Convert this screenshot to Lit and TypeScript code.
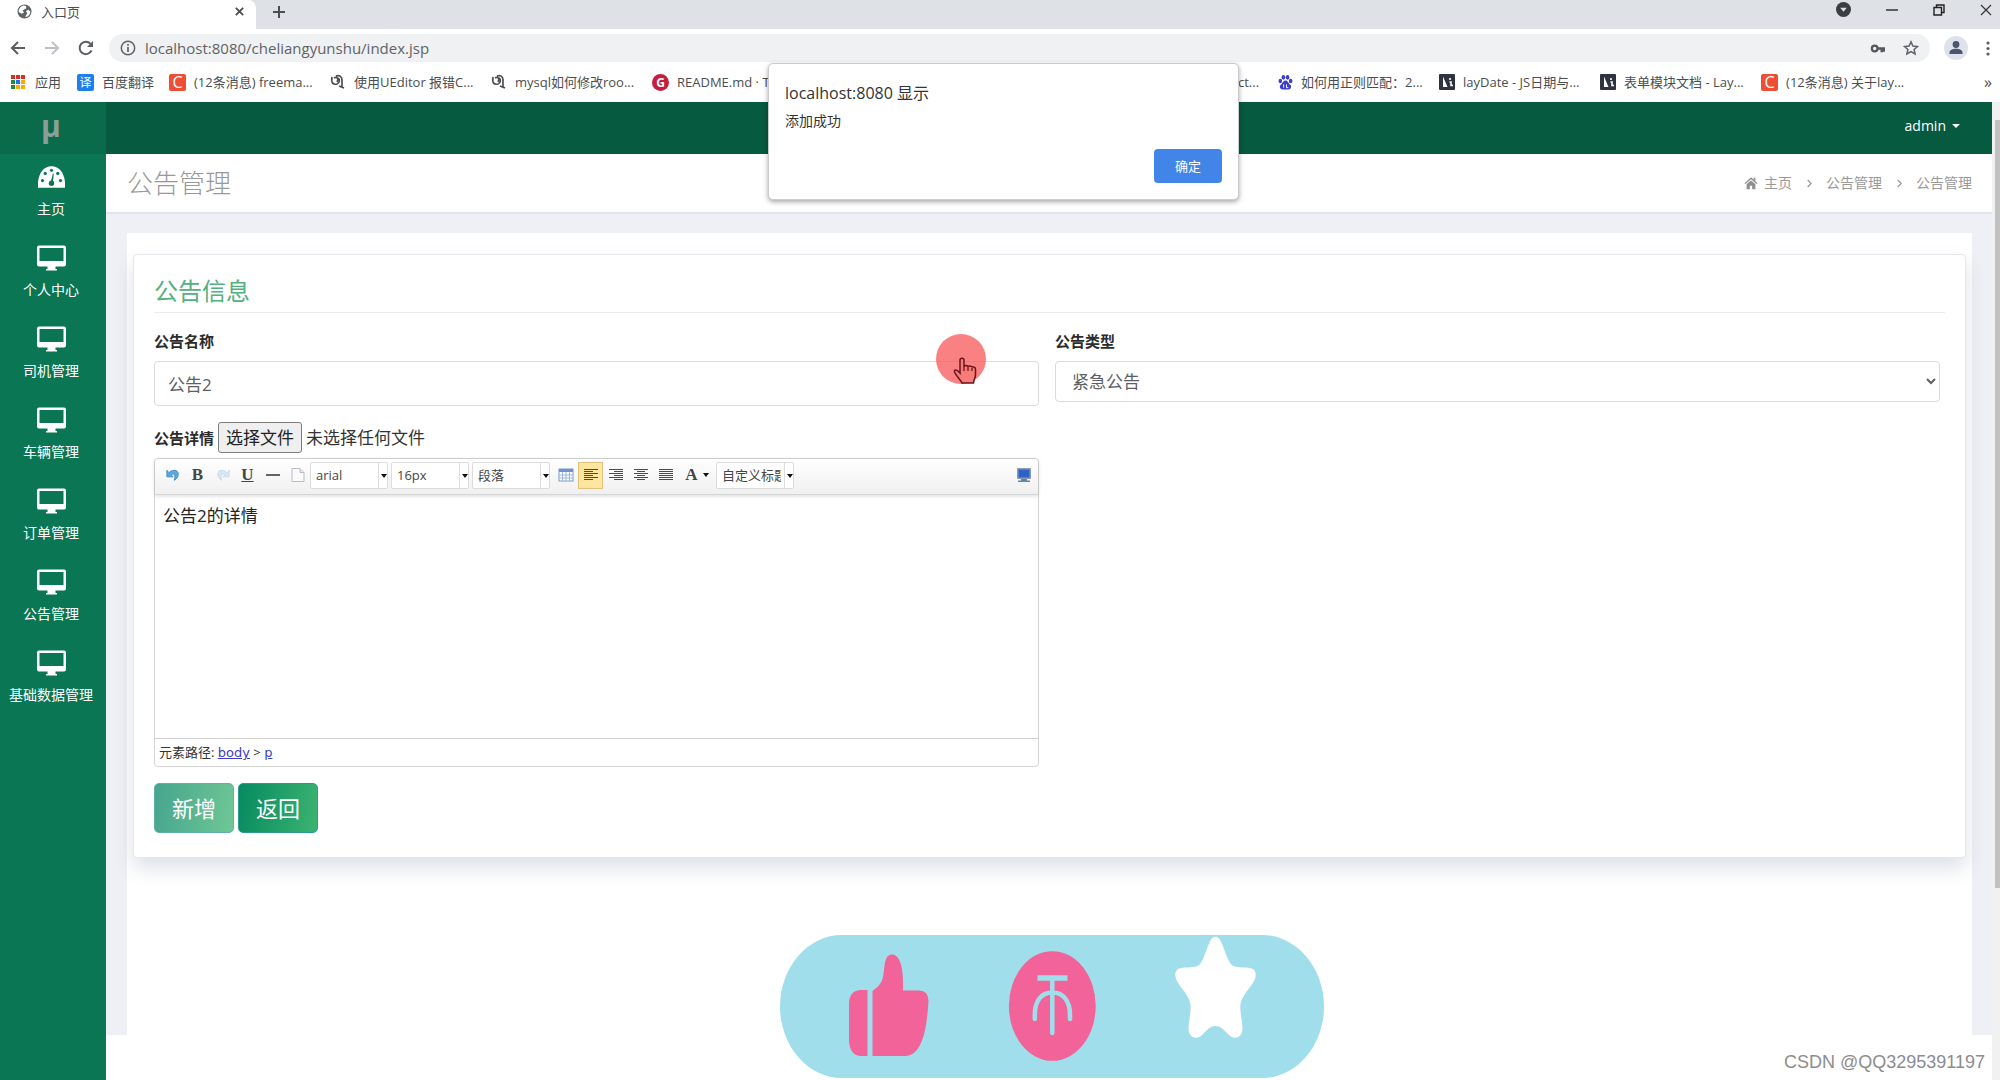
import { LitElement, html, css, svg, nothing } from "lit";
import { customElement, state } from "lit/decorators.js";
import { classMap } from "lit/directives/class-map.js";

const icon = (body: unknown, w = 16, h = 16, vb = "0 0 16 16") =>
  html`<svg class="ic" width=${w} height=${h} viewBox=${vb} aria-hidden="true">${body}</svg>`;

/* ---------- browser icons ---------- */
const globe = svg`<circle cx="8" cy="8" r="7.5" fill="#5f6368"/><path d="M7 1.5C4 2 1.500 5 1.800 8.500L5 10.500 7.500 9 6 7 8 5.500 10 4.500 9.500 2ZM12 6 9.500 7.500 11 10 9.500 12 9 14.200C12 13.500 14.300 11 14.300 8Z" fill="#fff"/>`;
const back = svg`<path d="M15 8H2M8 2 2 8l6 6" fill="none" stroke="#5a5d61" stroke-width="2"/>`;
const fwd = svg`<path d="M1 8h13M8 2l6 6-6 6" fill="none" stroke="#bdc0c4" stroke-width="2"/>`;
const reload = svg`<path d="M13.500 10.500A6.200 6.200 0 1 1 12.500 3.800" fill="none" stroke="#5a5d61" stroke-width="2"/><path d="M15 1v6H9Z" fill="#5a5d61"/>`;
const info = svg`<circle cx="8" cy="8" r="6.700" fill="none" stroke="#5f6368" stroke-width="1.500"/><path d="M8 7v5M8 4v1.700" stroke="#5f6368" stroke-width="1.700"/>`;
const key = svg`<circle cx="5" cy="8" r="3" fill="none" stroke="#55585c" stroke-width="2.400"/><path d="M8 8h8M12.500 8v4M15 8v3.500" stroke="#55585c" stroke-width="2.600"/>`;
const starLine = svg`<path d="M8 1.800 9.900 6l4.600.5-3.400 3 1 4.500L8 11.600 3.900 14l1-4.500-3.400-3L6.100 6Z" fill="none" stroke="#5f6368" stroke-width="1.500"/>`;
const person = svg`<circle cx="12" cy="12" r="12" fill="#dfe2ea"/><circle cx="12" cy="8.500" r="3.400" fill="#4c5570"/><path d="M5.500 18v-1.500c0-5 13-5 13 0V18Z" fill="#4c5570"/>`;

/* ---------- bookmark icons ---------- */
const apps = svg`${["#d93025", "#d93025", "#d93025", "#1e8e3e", "#1a73e8", "#f9ab00", "#1e8e3e", "#f9ab00", "#f9ab00"].map(
  (c, i) => svg`<rect x=${1 + (i % 3) * 5} y=${1 + Math.floor(i / 3) * 5} width="4" height="4" fill=${c}/>`
)}`;
const person2 = svg`<path d="M2 3c-1 6 1 8 5 7 3-1 3-5 1-6M6 2c3-1 6 0 6 4v8M9 12l5 2M4 4c3-2 5 1 3 4" fill="none" stroke="#4a4d52" stroke-width="1.700"/>`;
const paw = svg`<g fill="#3a3fd0"><ellipse cx="2.500" cy="7" rx="1.900" ry="2.400"/><ellipse cx="5.800" cy="3" rx="1.900" ry="2.600"/><ellipse cx="10.200" cy="3" rx="1.900" ry="2.600"/><ellipse cx="13.500" cy="7" rx="1.900" ry="2.400"/><path d="M8 6.500c2.500 0 3 3 5 4.500s1 5-2 5c-1.500 0-4.500 0-6 0-3 0-4-3.500-2-5s2.500-4.500 5-4.500Z"/></g><path d="M6 10.500v3.500M9 10.500v3.500h2" stroke="#fff" fill="none"/>`;
const lay = svg`<rect width="16" height="16" rx="1" fill="#2f3340"/><path d="M4 2.500 8.500 13H4Z" fill="#fff"/><path d="M11 4v2M10.500 8h1.500v3.500h2" stroke="#fff" stroke-width="1.600" fill="none"/>`;

/* ---------- application icons ---------- */
const gauge = svg`<path d="M0 24C-1 10 5 0 15 0s16 10 15 24Z" fill="#fff"/><g fill="#0a7653"><circle cx="5" cy="16" r="1.800"/><circle cx="8" cy="8" r="1.800"/><circle cx="15" cy="4.500" r="1.800"/><circle cx="22" cy="8" r="1.800"/><circle cx="25" cy="16" r="1.800"/><circle cx="15" cy="19" r="3"/><path d="M14 18 16.500 8l1 .3L16.500 19Z"/></g>`;
const monitor = svg`<path fill-rule="evenodd" d="M2 0H27a2 2 0 0 1 2 2V19a2 2 0 0 1-2 2H18.500V23.500H20V25H9V23.500H10.500V21H2a2 2 0 0 1-2-2V2A2 2 0 0 1 2 0ZM2.500 2.500V15.500H26.500V2.500Z" fill="#fff"/>`;
const house = svg`<path d="M8 1.500 0.500 8.200l1 1L8 3.600l6.500 5.600 1-1L13 6V2h-2v2.200ZM3 9.200V15h3.700v-4h2.600v4H13V9.200L8 5Z" fill="#8f8f8f"/>`;
const chevron = svg`<path d="M2 1 6 5 2 9" fill="none" stroke="#999" stroke-width="1.500"/>`;

/* ---------- editor icons ---------- */
const undo = (c: string, c2: string) => svg`<path d="M1 2v7.500h7L5.800 7.200C9 5 11.500 7 9.500 13.500 15.500 10 15.500 2 9.500 2 7 2 5 3 3.500 4.800Z" fill=${c} stroke=${c2}/>`;
const page = svg`<path d="M2 1.500h8l4 4v9H2Z" fill="#fafafa" stroke="#b9bcc4"/><path d="M10 1.500v4h4" fill="#e4e6ec" stroke="#b9bcc4"/>`;
const grid = svg`<rect x="1" y="2" width="14" height="12" fill="#fff" stroke="#7d9cd0"/><rect x="1" y="2" width="14" height="3" fill="#6f93cf"/><path d="M1 8h14M1 11h14M4.500 5v9M8 5v9M11.500 5v9" stroke="#9db5dc"/>`;
const lines = (rows: number[][]) => svg`${rows.map(([a, b], i) => svg`<path d=${`M${a} ${2.5 + i * 2}H${b}`} stroke="#4a4a4a"/>`)}`;
const alignLeft = lines([[1, 15], [1, 10], [1, 15], [1, 10], [1, 15], [1, 10]]);
const alignRight = lines([[1, 15], [6, 15], [1, 15], [6, 15], [1, 15], [6, 15]]);
const alignCenter = lines([[1, 15], [4, 12], [1, 15], [4, 12], [1, 15], [4, 12]]);
const alignFull = lines([[1, 15], [1, 15], [1, 15], [1, 15], [1, 15], [1, 15]]);
const screen = svg`<rect x="1" y="1" width="14" height="11" rx="1" fill="#8a9ab5"/><rect x="2.500" y="2.500" width="11" height="8" fill="#2f62c8"/><path d="M5 12h6v1.500h3V15H2v-1.500h3Z" fill="#5e87a0"/>`;

@customElement("browser-chrome")
export class BrowserChrome extends LitElement {
  static styles = css`
    :host { display: block; background: #fff; color: #4a4d51; font-size: 13px; line-height: 20px; }
    .ic { display: block; flex: none; }
    button { border: 0; background: none; padding: 0; color: inherit; font: inherit; display: flex; align-items: center; justify-content: center; }
    .tabs { height: 29px; background: #dee1e6; display: flex; align-items: stretch; }
    .tab { box-sizing: border-box; width: 256px; background: #fff; display: flex; align-items: center; gap: 9px; padding: 0 11px 6px 17px; border-radius: 0 8px 0 0; }
    .tabname { flex: 1; }
    .new { width: 46px; padding-bottom: 6px; }
    .win { margin-left: auto; display: flex; align-items: center; gap: 35px; padding: 0 8px 10px 0; }
    .bar { display: flex; align-items: center; height: 38px; padding: 0 10px; }
    .nav { display: flex; gap: 18px; margin-right: 15px; }
    .omni { flex: 1; display: flex; align-items: center; gap: 9px; height: 28px; border-radius: 14px; background: #eff1f3; padding: 0 11px; color: #74777b; }
    .url { flex: 1; min-width: 0; border: 0; background: none; padding: 0; font: inherit; font-size: 15px; line-height: 24px; color: #606367; }
    .omni .star { margin-left: 9px; }
    .acct { margin: 0 18px 0 14px; }
    .marks { display: flex; align-items: center; height: 30px; padding: 0 8px 5px 10px; white-space: nowrap; }
    .mark { display: flex; align-items: center; gap: 8px; color: inherit; text-decoration: none; }
    .fix { width: 161px; }
    .a1 { width: 67px; gap: 9px; }
    .a2 { width: 92px; }
    .mid { flex: 1; display: flex; justify-content: space-between; padding-right: 19px; }
    .sq { width: 17px; height: 17px; border-radius: 2px; color: #fff; text-align: center; line-height: 17px; background: #ee4f34; font-size: 16px; }
    .blue { background: #1e7fec; font-size: 12px; }
    .red { background: #c71d3c; border-radius: 9px; font-weight: 700; font-size: 12px; }
    .more { margin-left: 62px; font-size: 16px; }
  `;
  private mark(ic: unknown, text: string, cls = "fix") {
    return html`<a class="mark ${cls}" href="#">${ic}<span>${text}</span></a>`;
  }
  render() {
    const c = html`<span class="sq">C</span>`;
    return html`
      <div class="tabs">
        <div class="tab">${icon(globe, 15, 15)}<span class="tabname">入口页</span>
          <button aria-label="关闭标签页">${icon(svg`<path d="M2 2l8 8M10 2 2 10" stroke="#4a4d51" stroke-width="2"/>`, 11, 11, "0 0 12 12")}</button></div>
        <button class="new" aria-label="新标签页">${icon(svg`<path d="M6 0v12M0 6h12" stroke="#4a4d51" stroke-width="2"/>`, 12, 12, "0 0 12 12")}</button>
        <div class="win">
          <button aria-label="搜索标签页">${icon(svg`<circle cx="8" cy="8" r="8" fill="#3a3d41"/><path d="M4.500 6h7L8 10.500Z" fill="#dee1e6"/>`, 15, 15)}</button>
          <button aria-label="最小化">${icon(svg`<path d="M0 6h12" stroke="#333" stroke-width="1.500"/>`, 12, 12, "0 0 12 12")}</button>
          <button aria-label="还原">${icon(svg`<path d="M1 3.500h7.500V11H1ZM3.500 3V1H11v7.500H9" fill="none" stroke="#222" stroke-width="1.400"/>`, 12, 12, "0 0 12 12")}</button>
          <button aria-label="关闭">${icon(svg`<path d="M1 1l10 10M11 1 1 11" stroke="#333" stroke-width="1.200"/>`, 12, 12, "0 0 12 12")}</button>
        </div>
      </div>
      <div class="bar">
        <div class="nav">
          <button aria-label="后退">${icon(back)}</button>
          <button aria-label="前进">${icon(fwd)}</button>
          <button aria-label="刷新">${icon(reload)}</button>
        </div>
        <div class="omni">${icon(info)}
          <input class="url" aria-label="地址" .value=${"localhost:8080/cheliangyunshu/index.jsp"} />
          <button aria-label="密码">${icon(key, 15, 15)}</button>
          <button class="star" aria-label="收藏">${icon(starLine)}</button>
        </div>
        <button class="acct" aria-label="帐户">${icon(person, 24, 24, "0 0 24 24")}</button>
        <button aria-label="菜单">${icon(svg`<g fill="#5a5d61"><circle cx="2" cy="2" r="1.600"/><circle cx="2" cy="7.500" r="1.600"/><circle cx="2" cy="13" r="1.600"/></g>`, 4, 15, "0 0 4 15")}</button>
      </div>
      <nav class="marks">
        ${this.mark(icon(apps), "应用", "a1")}
        ${this.mark(html`<span class="sq blue">译</span>`, "百度翻译", "a2")}
        ${this.mark(c, "(12条消息) freema...")}
        ${this.mark(icon(person2), "使用UEditor 报错C...")}
        ${this.mark(icon(person2), "mysql如何修改roo...")}
        <div class="mid">
          ${this.mark(html`<span class="sq red">G</span>`, "README.md · T", "")}
          ${this.mark(nothing, "ct...", "")}
        </div>
        ${this.mark(icon(paw, 15), "如何用正则匹配：2...")}
        ${this.mark(icon(lay), "layDate - JS日期与...")}
        ${this.mark(icon(lay), "表单模块文档 - Lay...")}
        ${this.mark(c, "(12条消息) 关于lay...")}
        <button class="more" aria-label="更多书签">»</button>
      </nav>`;
  }
}

@customElement("rich-editor")
export class RichEditor extends LitElement {
  @state() private align = "left";
  static styles = css`
    :host { display: block; border: 1px solid #d4d4d4; border-radius: 4px; background: #fff; color: #333; font-size: 13px; }
    .ic { display: block; }
    .tools { display: flex; align-items: center; height: 36px; box-sizing: border-box; padding: 0 2px 3px 5px; border-bottom: 1px solid #d6d6d6; background: linear-gradient(#fff, #f0f0f0); border-radius: 4px 4px 0 0; box-shadow: 0 1px 4px rgba(0, 0, 0, 0.15); }
    .b { width: 25px; height: 27px; padding: 0; border: 1px solid transparent; background: none; display: flex; align-items: center; justify-content: center; color: #444; font: 700 17px/20px "Liberation Serif", serif; }
    .on { background: #ffe69f; border-color: #e3c07c; }
    .u { text-decoration: underline; }
    .wide { width: 38px; gap: 5px; }
    .end { margin-left: auto; }
    .pick { position: relative; margin-right: 3px; }
    .pick select { appearance: none; display: block; width: 78px; height: 27px; padding: 0 12px 0 5px; border: 1px solid #dcdcdc; border-radius: 2px; background: #fff; color: #444; font: inherit; }
    .pick::before { content: ""; position: absolute; right: 9px; top: 1px; bottom: 1px; border-left: 1px solid #ddd; }
    .pick::after, .tri { content: ""; border: 3px solid transparent; border-top: 4px solid #111; border-bottom: 0; }
    .pick::after { position: absolute; right: 1px; top: 12px; }
    .text { height: 243px; padding: 9px 8px; box-sizing: border-box; font-size: 17px; line-height: 24px; color: #222; }
    .text p { margin: 0; }
    .path { border-top: 1px solid #d0d0d0; height: 27px; line-height: 27px; padding: 0 4px; }
    .path a { color: #3c3cc8; font-family: "DejaVu Sans", sans-serif; }
  `;
  private al(name: string, label: string, ic: unknown) {
    return html`<button class=${classMap({ b: true, on: this.align === name })} aria-label=${label}
      @click=${() => (this.align = name)}>${icon(ic)}</button>`;
  }
  private pick(label: string, value: string) {
    return html`<span class="pick"><select aria-label=${label}><option>${value}</option></select></span>`;
  }
  render() {
    return html`
      <div class="tools" role="toolbar" aria-label="编辑工具">
        <button class="b" aria-label="撤销">${icon(undo("#5ea8e0", "#3d86c4"), 14, 15)}</button>
        <button class="b">B</button>
        <button class="b" aria-label="重做"><svg class="ic" width="14" height="15" viewBox="0 0 16 16"><g transform="matrix(-1 0 0 1 16 0)">${undo("#d6e6f3", "#c3d9ea")}</g></svg></button>
        <button class="b u">U</button>
        <button class="b" aria-label="分隔线">${icon(svg`<path d="M1 8h14" stroke="#333" stroke-width="1.500"/>`)}</button>
        <button class="b" aria-label="清空文档">${icon(page)}</button>
        ${this.pick("字体", "arial")} ${this.pick("字号", "16px")} ${this.pick("段落格式", "段落")}
        <button class="b" aria-label="插入表格">${icon(grid)}</button>
        ${this.al("left", "居左对齐", alignLeft)} ${this.al("right", "居右对齐", alignRight)}
        ${this.al("center", "居中对齐", alignCenter)} ${this.al("full", "两端对齐", alignFull)}
        <button class="b wide">A<span class="tri"></span></button>
        ${this.pick("自定义标题", "自定义标题")}
        <button class="b end" aria-label="全屏">${icon(screen)}</button>
      </div>
      <div class="text" contenteditable="true" role="textbox" aria-label="公告详情"><p>公告2的详情</p></div>
      <div class="path">元素路径: <a href="#">body</a> &gt; <a href="#">p</a></div>`;
  }
}

@customElement("app-root")
export class AppRoot extends LitElement {
  private items = ["个人中心", "司机管理", "车辆管理", "订单管理", "公告管理", "基础数据管理"];
  static styles = css`
    :host { display: flex; flex-direction: column; position: relative; min-height: 100vh; overflow: hidden; background: #fff; color: #333; font: 14px/20px "Open Sans", "Noto Sans CJK SC", sans-serif; }
    .ic { display: block; flex: none; }
    .app { flex: 1; display: flex; }
    .side { width: 106px; flex: none; background: #0a7653; }
    .logo { height: 52px; box-sizing: border-box; padding-right: 4px; background: #0a6b4b; color: #8b9f96; text-align: center; font-size: 30px; line-height: 48px; font-weight: 700; }
    .item { display: flex; flex-direction: column; align-items: center; box-sizing: border-box; height: 81px; padding: 10px 4px 0 0; gap: 9px; color: #fff; text-decoration: none; }
    .item .ic { height: 26px; }
    .main { flex: 1; min-width: 0; display: flex; flex-direction: column; }
    .top { height: 52px; background: #065a40; display: flex; justify-content: flex-end; align-items: center; padding: 0 32px 4px 0; box-sizing: border-box; }
    .user { border: 0; background: none; padding: 0; color: #fff; font: inherit; display: flex; align-items: center; gap: 6px; }
    .tri { border: 4px solid transparent; border-top-color: #fff; border-bottom: 0; }
    .head { display: flex; align-items: center; justify-content: space-between; height: 60px; box-sizing: border-box; padding: 0 20px 0 21px; border-bottom: 2px solid #e1e4e8; color: #999; }
    .head h1 { margin: 0; font-size: 26px; line-height: 36px; font-weight: 300; }
    .crumbs { display: flex; align-items: center; gap: 14px; }
    .crumbs a { color: inherit; text-decoration: none; display: flex; align-items: center; gap: 6px; }
    .content { flex: 1; display: flex; background: #eff0f5; padding: 19px 20px 0 21px; }
    .wrap { flex: 1; min-width: 0; background: #fff; padding: 21px 6px 0; }
    .card { border: 1px solid #e6e7ea; border-radius: 4px; background: #fff; padding: 18px 20px 24px; box-shadow: 0 10px 20px rgba(50, 60, 110, 0.16); }
    .card h2 { margin: 0 0 17px; padding-bottom: 3px; border-bottom: 1px solid #ececec; color: #54b07e; font-size: 24px; line-height: 36px; font-weight: 400; }
    .form { display: grid; grid-template-columns: 1fr 1fr; gap: 16px; align-items: start; padding-right: 5px; }
    label { font-size: 15px; line-height: 22px; font-weight: 700; color: #2c2c2c; }
    .field { display: flex; flex-direction: column; gap: 9px; }
    .ctl { box-sizing: border-box; width: 100%; height: 45px; border: 1px solid #d9dbde; border-radius: 4px; background: #fff; color: #5c5f63; font: inherit; font-size: 17px; padding: 0 13px; }
    select.ctl { height: 41px; padding: 0 12px; }
    .file { display: flex; align-items: center; gap: 4px; margin-bottom: 5px; font-size: 17px; line-height: 24px; }
    .file button { height: 31px; border: 1px solid #7d7d7d; border-radius: 3px; background: #efefef; color: #222; font: inherit; padding: 0 7px; }
    .actions { display: flex; gap: 4px; margin-top: 16px; }
    .actions button { width: 80px; height: 50px; border: 1px solid #2a9a94; border-radius: 5px; color: #fff; font: inherit; font-size: 22px; padding: 0; background: linear-gradient(100deg, #058a60, #3cb371); }
    .actions .dim { background: linear-gradient(100deg, #45a58e, #6fc795); border-color: #5fb0a6; }
    .foot { height: 45px; }
    .scroll { width: 8px; flex: none; background: #f1f1f1; padding: 18px 0 0 3px; box-sizing: border-box; }
    .thumb { height: 80%; background: #c1c1c1; }
    .dialog { position: absolute; top: 63px; left: 50%; margin: 0 0 0 -232px; box-sizing: border-box; width: 471px; height: 137px; padding: 17px 16px 16px; border: 1px solid #c9cbce; border-radius: 5px; background: #fff; box-shadow: 0 2px 5px rgba(0, 0, 0, 0.35); display: flex; flex-direction: column; color: #333; }
    .dialog strong { font-weight: 400; font-size: 16px; line-height: 24px; }
    .dialog p { margin: 6px 0 0; }
    .dialog button { margin-top: auto; align-self: flex-end; width: 68px; height: 34px; border: 0; border-radius: 4px; background: #4285e8; color: #fff; font: inherit; font-size: 13px; }
    .pointer { position: absolute; left: 48%; top: 333px; margin-left: -25px; }
    .pill { position: absolute; left: 50%; margin-left: -220px; bottom: 2px; }
    .sign { position: absolute; right: 15px; bottom: 6px; color: #8d8d8d; font: 18px/24px "Liberation Sans", sans-serif; text-shadow: 0 0 2px #fff; }
  `;
  private pickFile() {
    (this.renderRoot.querySelector("#file") as HTMLInputElement).click();
  }
  render() {
    return html`
      <browser-chrome></browser-chrome>
      <div class="app">
        <nav class="side">
          <div class="logo">μ</div>
          <a class="item" href="#">${icon(gauge, 27, 23, "0 0 30 24")}<span>主页</span></a>
          ${this.items.map((t) => html`<a class="item" href="#">${icon(monitor, 29, 25, "0 0 29 25")}<span>${t}</span></a>`)}
        </nav>
        <div class="main">
          <header class="top"><button class="user">admin<span class="tri"></span></button></header>
          <div class="head">
            <h1>公告管理</h1>
            <div class="crumbs">
              <a href="#">${icon(house, 14, 14)}主页</a>${icon(chevron, 6, 9, "0 0 7 10")}
              <a href="#">公告管理</a>${icon(chevron, 6, 9, "0 0 7 10")}<span>公告管理</span>
            </div>
          </div>
          <div class="content">
            <div class="wrap">
              <section class="card">
                <h2>公告信息</h2>
                <div class="form">
                  <div class="field"><label for="name">公告名称</label><input class="ctl" id="name" .value=${"公告2"} /></div>
                  <div class="field"><label for="type">公告类型</label><select class="ctl" id="type"><option>紧急公告</option></select></div>
                  <div>
                    <div class="file"><label for="file">公告详情</label><button @click=${this.pickFile}>选择文件</button><span>未选择任何文件</span><input type="file" id="file" hidden /></div>
                    <rich-editor></rich-editor>
                  </div>
                </div>
                <div class="actions"><button class="dim">新增</button><button>返回</button></div>
              </section>
            </div>
          </div>
          <div class="foot"></div>
        </div>
        <div class="scroll"><div class="thumb"></div></div>
      </div>

      <svg class="pointer" width="52" height="54" viewBox="0 0 52 54" aria-hidden="true">
        <circle cx="26" cy="26" r="25" fill="#f75a5a" fill-opacity=".76"/>
        <path d="M25 40V27c0-2.500 4-2.500 4 0v7c0-2 4-2 4 0 0-1.500 4-1.500 4 .5 0-1 3.500-1 3.500 1.500v6c0 3-2 5-2 8H27c-1-3-6-7-7.500-11-.8-2.500 2.500-3 5.500 1Z" fill="#f77b78" stroke="#6b1418" stroke-width="1.500"/>
        <path d="M29 34v4M33 34v4M37 35v3" stroke="#6b1418" stroke-width="1.300"/>
      </svg>

      <div class="dialog" role="alertdialog" aria-labelledby="dt">
        <strong id="dt">localhost:8080 显示</strong>
        <p>添加成功</p>
        <button>确定</button>
      </div>

      <svg class="pill" width="544" height="143" viewBox="0 0 544 143" aria-hidden="true">
        <rect width="544" height="143" rx="62" ry="71.500" fill="#a0deeb"/>
        <g fill="#f16399">
          <path d="M87.500 55H80Q69 56 69 69V106Q70 120 80 121H87.500Z"/>
          <path d="M92.500 56C101 50 103 46 104 35 105 24 107 19.500 112 19.500 119 19.500 124 30 123 55.500H139Q148.500 55.500 148.500 66C147 88 144 121 125 121H92.500Z"/>
          <ellipse cx="272.300" cy="71" rx="43.400" ry="54.800"/>
        </g>
        <g fill="none" stroke="#a0deeb" stroke-width="4.500">
          <path d="M257.500 43H287.500" stroke-width="5.500"/>
          <path d="M272.300 43V98M254.800 84V80C254.800 65 262 57.500 272.300 57.500S290 65 290 80V84" stroke-linecap="round"/>
        </g>
        <path d="M435.400 1.700C443 1.700 445 24 452.500 30.500 458 34 468 31 473 34 480 40 472 50 467 56 460 66 460 70 460.500 76 461 84 463.500 91 462 97 460 104 453 104 449 100 445 96 441 91 435.400 91 430 91 426 96 422 100 418 104 411 104 409 97 407.500 91 410 84 410.500 76 411 70 411 66 404 56 399 50 391 40 398 34 403 31 413 34 418.500 30.500 426 24 428 1.700 435.400 1.700Z" fill="#fff"/>
      </svg>
      <div class="sign">CSDN @QQ3295391197</div>`;
  }
}
